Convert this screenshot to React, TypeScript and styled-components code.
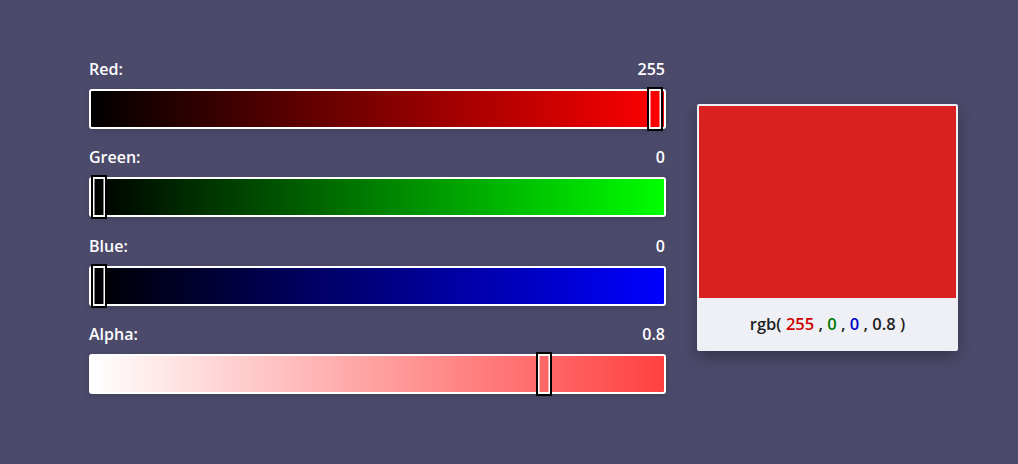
import React from "react";
import styled, { createGlobalStyle } from "styled-components";

const Global = createGlobalStyle`
  html, body { margin: 0; padding: 0; background: #4b4a6b; }
  body { font-family: "Open Sans", "Noto Sans", sans-serif; }
`;

const Page = styled.div`
  width: 1018px;
  height: 464px;
  box-sizing: border-box;
  padding: 56px 60px 0 89px;
  display: flex;
  align-items: flex-start;
  gap: 31px;
  background: #4b4a6b;
`;

const Sliders = styled.div`
  width: 577px;
  display: flex;
  flex-direction: column;
  gap: 15.4px;
`;

const Row = styled.div`
  display: flex;
  flex-direction: column;
  gap: 7px;
`;

const LabelRow = styled.div`
  display: flex;
  justify-content: space-between;
  align-items: baseline;
  color: #ffffff;
  font-size: 16px;
  font-weight: 600;
  line-height: 26px;
  padding-right: 1px;
`;

const Track = styled.div<{ $bg: string }>`
  position: relative;
  height: 40px;
  box-sizing: border-box;
  border: 2px solid #ffffff;
  border-radius: 3px;
  background: ${(p) => p.$bg};
  box-shadow: 0 2px 6px rgba(0, 0, 0, 0.15);
`;

const Thumb = styled.div`
  position: absolute;
  top: -4px;
  width: 16px;
  height: 44px;
  box-sizing: border-box;
  border: 2px solid #000000;
  box-shadow: inset 0 0 0 1.5px #ffffff;
  background: transparent;
`;

const Card = styled.div`
  width: 261px;
  height: 247px;
  margin-top: 48px;
  box-sizing: border-box;
  border: 2px solid #eef0f5;
  background: #eef0f5;
  border-radius: 2px;
  display: flex;
  flex-direction: column;
  box-shadow: 0 6px 16px rgba(0, 0, 0, 0.3);
`;

const Swatch = styled.div<{ $color: string }>`
  height: 192px;
  background: ${(p) => p.$color};
`;

const Footer = styled.div`
  flex: 1;
  display: flex;
  align-items: center;
  justify-content: center;
  font-size: 16.5px;
  font-weight: 600;
  color: #1f1f24;
  white-space: pre;
  padding-bottom: 1px;
`;

const Num = styled.span<{ $c: string }>`
  color: ${(p) => p.$c};
`;

type S = { label: string; value: number; max: number; display: string; bg: string };

const sliders: S[] = [
  { label: "Red:", value: 255, max: 255, display: "255", bg: "linear-gradient(to right, #000000, #ff0000)" },
  { label: "Green:", value: 0, max: 255, display: "0", bg: "linear-gradient(to right, #000000, #00ff00)" },
  { label: "Blue:", value: 0, max: 255, display: "0", bg: "linear-gradient(to right, #000000, #0000ff)" },
  {
    label: "Alpha:",
    value: 0.8,
    max: 1,
    display: "0.8",
    bg: "linear-gradient(to right, rgba(255,0,0,0), rgba(255,0,0,0.75)), #ffffff",
  },
];

export default function App() {
  return (
    <>
      <Global />
      <Page>
        <Sliders>
          {sliders.map((s) => (
            <Row key={s.label}>
              <LabelRow>
                <span>{s.label}</span>
                <span>{s.display}</span>
              </LabelRow>
              <Track $bg={s.bg}>
                <Thumb style={{ left: (s.value / s.max) * 556 }} />
              </Track>
            </Row>
          ))}
        </Sliders>
        <Card>
          <Swatch $color="#d92121" />
          <Footer>
            {"rgb( "}
            <Num $c="#d00000">255</Num>
            {" , "}
            <Num $c="#007a00">0</Num>
            {" , "}
            <Num $c="#0000c8">0</Num>
            {" , 0.8 )"}
          </Footer>
        </Card>
      </Page>
    </>
  );
}
